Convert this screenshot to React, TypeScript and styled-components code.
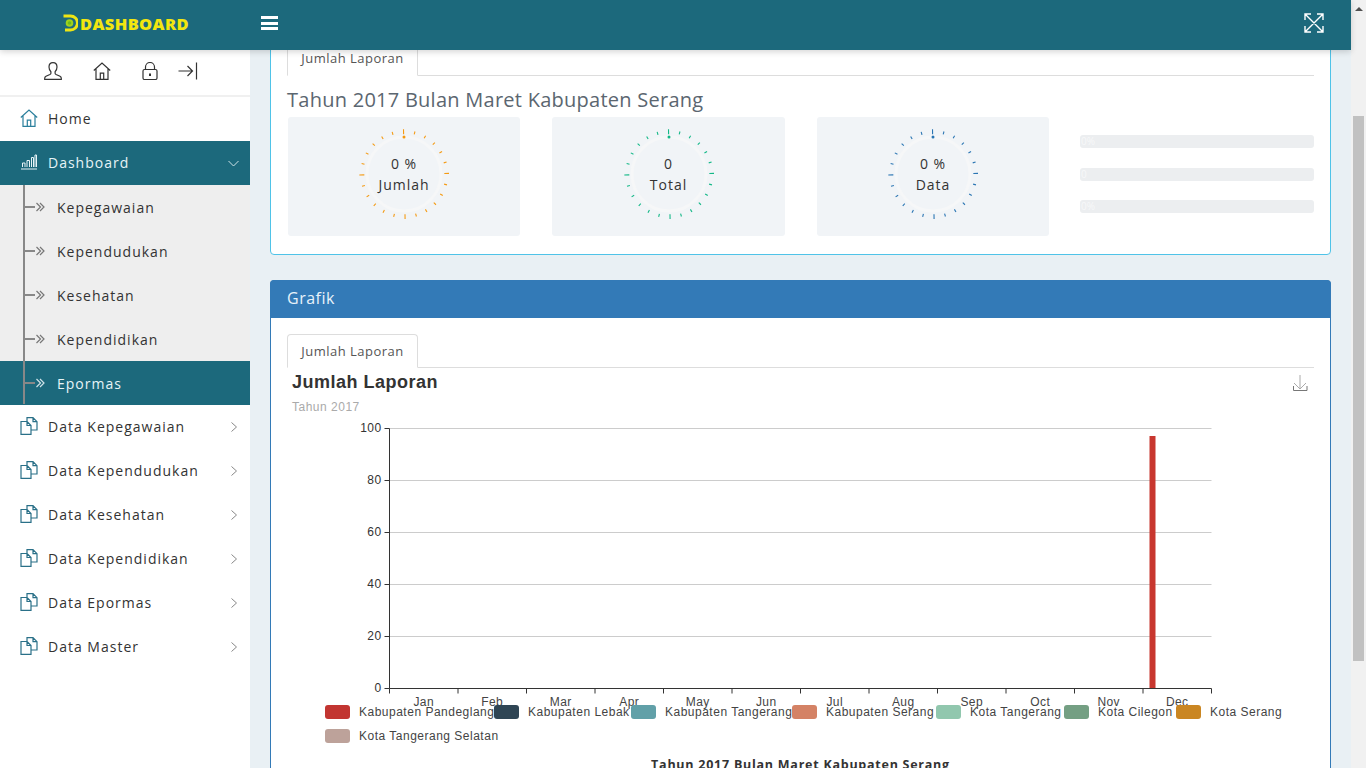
import React from 'react';
import styled, {createGlobalStyle} from 'styled-components';

const TEAL = '#1c697c';

const GlobalStyle = createGlobalStyle`
	html, body {
		margin: 0;
		padding: 0;
		height: 100%;
		overflow: hidden;
	}
	body {
		font-family: 'Open Sans', 'Liberation Sans', sans-serif;
		font-size: 14px;
		letter-spacing: 1px;
		color: #333;
	}
`;

const Shell = styled.div`
	display: flex;
	height: 768px;
	overflow: hidden;
`;

const Page = styled.div`
	flex: 1;
	min-width: 0;
	display: flex;
	flex-direction: column;
`;

const TopBar = styled.header`
	position: relative;
	z-index: 5;
	flex: 0 0 50px;
	box-sizing: border-box;
	padding-bottom: 4px;
	display: flex;
	align-items: center;
	background: ${TEAL};
	box-shadow: 0 2px 6px rgba(0, 0, 0, 0.16);
`;

const Brand = styled.div`
	width: 250px;
	display: flex;
	align-items: center;
	padding-left: 63px;
	box-sizing: border-box;
	gap: 2px;
	font-family: 'Open Sans', sans-serif;
	font-weight: 800;
	font-size: 16.5px;
	letter-spacing: 0.35px;
	color: #f2e60f;
`;

const Burger = styled.button`
	display: flex;
	flex-direction: column;
	gap: 2.5px;
	width: 17px;
	margin-left: 11px;
	padding: 0;
	border: 0;
	background: none;

	span {
		height: 3px;
		background: #fff;
	}
`;

const FullscreenButton = styled.div`
	margin-left: auto;
	margin-right: 27px;
	height: 20px;
`;

const Body = styled.div`
	flex: 1;
	min-height: 0;
	display: flex;
`;

const Sidebar = styled.aside`
	flex: 0 0 250px;
	background: #fff;
`;

const QuickIcons = styled.div`
	height: 47px;
	box-sizing: border-box;
	padding-bottom: 4px;
	display: flex;
	align-items: center;
	gap: 31px;
	padding-left: 44px;
	border-bottom: 2px solid #f0f0f0;

	svg:last-child {
		margin-left: -11px;
	}
`;

const NavRow = styled.div<{$active?: boolean}>`
	height: 44px;
	box-sizing: border-box;
	padding-bottom: 2px;
	display: flex;
	align-items: center;
	padding-left: 20px;
	gap: 10px;
	background: ${p => (p.$active ? TEAL : 'transparent')};
	color: ${p => (p.$active ? '#e6f4f7' : '#333')};
`;

const NavCaret = styled.span`
	margin-left: auto;
	margin-right: 12px;
	display: flex;
	padding-top: 2px;
`;

const SubMenu = styled.div`
	position: relative;
	background: #eee;

	&::before {
		content: '';
		position: absolute;
		left: 23px;
		top: 0;
		bottom: 1px;
		width: 2px;
		background: #888;
		z-index: 1;
	}
`;

const SubRow = styled.div<{$active?: boolean}>`
	height: 44px;
	display: flex;
	align-items: center;
	padding-left: 25px;
	background: ${p => (p.$active ? TEAL : 'transparent')};
	color: ${p => (p.$active ? '#e6f4f7' : '#333')};
`;

const Connector = styled.span`
	width: 10px;
	height: 2px;
	background: #888;
	margin-right: 1px;
`;

const SubLabel = styled.span`
	margin-left: 12px;
`;

const Content = styled.main`
	flex: 1;
	min-width: 0;
	overflow: hidden;
	background: #e9f0f4;
	padding: 0 20px;
`;

const Panel = styled.section<{$tone: string; $lift?: number}>`
	border: 1px solid ${p => p.$tone};
	border-radius: 4px;
	background: #fff;
	margin-top: ${p => p.$lift ?? 25}px;
`;

const PanelHead = styled.div`
	height: 38px;
	box-sizing: border-box;
	padding-bottom: 2px;
	margin: -1px -1px 0;
	display: flex;
	align-items: center;
	padding-left: 17px;
	background: #337ab7;
	border-radius: 4px 4px 0 0;
	color: #e8f2fa;
	font-size: 16px;
	letter-spacing: 0.5px;
`;

const PanelBody = styled.div`
	padding: 16px 16px 18px;
`;

const TabBar = styled.div`
	display: flex;
	border-bottom: 1px solid #ddd;
`;

const Tab = styled.div<{$raised?: boolean}>`
	height: 34px;
	width: 131px;
	box-sizing: border-box;
	margin-bottom: -1px;
	padding-bottom: ${p => (p.$raised ? 2 : 0)}px;
	display: flex;
	align-items: center;
	justify-content: center;
	border: 1px solid #ddd;
	border-bottom-color: #fff;
	border-radius: 4px 4px 0 0;
	font-size: 13px;
	letter-spacing: 0.5px;
	color: #555;
	background: #fff;
`;

const PeriodTitle = styled.h3`
	margin: 0;
	height: 41px;
	line-height: 48px;
	font-size: 20px;
	font-weight: 400;
	letter-spacing: 0.26px;
	color: #5b6670;
`;

const StatGrid = styled.div`
	display: grid;
	grid-template-columns: 232px 233px 232px 1fr;
	column-gap: 32px;
	padding-left: 1px;
`;

const StatCard = styled.div`
	height: 119px;
	box-sizing: border-box;
	padding-top: 12px;
	display: flex;
	justify-content: center;
	background: #f1f4f7;
	border-radius: 3px;
`;

const Dial = styled.div`
	position: relative;
	width: 90px;
	height: 90px;
`;

const DialFace = styled.div`
	position: absolute;
	inset: 0;
	display: flex;
	flex-direction: column;
	align-items: center;
	justify-content: center;
	line-height: 21px;
`;

const MeterColumn = styled.div`
	margin-left: -1px;
	padding-top: 18px;
	display: flex;
	flex-direction: column;
	gap: 19.5px;
`;

const Meter = styled.div`
	height: 13px;
	border-radius: 3px;
	background: #eceef0;
	color: #f7f8f9;
	font-size: 10px;
	line-height: 13px;
	letter-spacing: 0;
	padding-left: 1px;
`;

const Caption = styled.div`
	margin-top: 2px;
	text-align: center;
	font-size: 12.5px;
	font-weight: 700;
	letter-spacing: 0.75px;
	color: #333;
`;

const ScrollTrack = styled.div`
	flex: 0 0 15px;
	display: flex;
	flex-direction: column;
	background: #f1f1f1;
`;

const ScrollArrow = styled.div`
	height: 17px;
	display: flex;
	align-items: center;
	justify-content: center;
	flex: none;

	&::before {
		content: '';
		border-left: 4px solid transparent;
		border-right: 4px solid transparent;
		border-bottom: 4px solid #505050;
	}
`;

const ScrollThumb = styled.div`
	height: 545px;
	margin: 99px 2px 0;
	background: #c1c1c1;
`;

type IconProps = {color?: string};

const Line = {fill: 'none', strokeWidth: 1.2} as const;

const UserIcon = () => (
	<svg width="18" height="18" viewBox="0 0 18 18" stroke="#333" {...Line}>
		<path d="M9 .7c-2.400 0-4 1.800-4 4.400 0 1.900.8 3.600 1.900 4.600v1.500c0 .6-.4 1-1 1.300L2 14.200c-.8.4-1.300 1.200-1.300 2.100v1h16.600v-1c0-.9-.5-1.700-1.300-2.100l-3.900-1.700c-.6-.3-1-.7-1-1.300V9.700C12.200 8.700 13 7 13 5.100 13 2.500 11.400.7 9 .7z" />
	</svg>
);

const HomeIcon = ({color = '#333'}: IconProps) => (
	<svg width="18" height="18" viewBox="0 0 18 18" stroke={color} {...Line}>
		<path d="M.8 8.500 9 1l8.200 7.500M3 6.600v10.800h12V6.600M7.300 17.400v-6.200h3.400v6.200" />
	</svg>
);

const LockIcon = () => (
	<svg width="16" height="18" viewBox="0 0 16 18" stroke="#333" {...Line}>
		<path d="M3.500 7.500V5a4.500 4.500 0 0 1 9 0v2.500" />
		<rect x="1" y="7.500" width="14" height="10" rx="1.500" />
		<path d="M8 11.500v2.500" strokeWidth="2" />
	</svg>
);

const ExitIcon = () => (
	<svg width="20" height="18" viewBox="0 0 20 18" stroke="#333" {...Line}>
		<path d="M.5 9h14M9.500 4l5 5-5 5M18.500 .5v17" />
	</svg>
);

const ChartIcon = () => (
	<svg width="18" height="16" viewBox="0 0 17 16" stroke="#e6f4f7" fill="none" strokeWidth="1">
		<path d="M.5 15h16M2 13V9h2.500v4M6.500 13V6.500H9V13M11 13V3.500h2V13M14.500 13V1H16v12" />
	</svg>
);

const FilesIcon = () => (
	<svg width="18" height="18" viewBox="0 0 18 18" stroke="#2a7088" fill="none" strokeWidth="1.200">
		<path d="M7 4.500H1v12.900h10v-4.400M7 4.500 11 8.500v4.500M7 4.500v4h4" />
		<path d="M7 4.500V.7h6l4 4v8.300h-6M13 .7v4h4" />
	</svg>
);

const Chevron = ({open, color}: {open?: boolean; color: string}) => (
	<svg width="8" height="12" viewBox="0 0 8 12" stroke={color} fill="none" strokeWidth="1" style={{overflow: 'visible'}}>
		<path d={open ? 'M-1.500 4l5 5 5-5' : 'M1.500 1.500l5 4.500-5 4.500'} />
	</svg>
);

const DoubleArrow = ({color}: {color: string}) => (
	<svg width="9" height="10" viewBox="0 0 9 10" stroke={color} fill="none" strokeWidth="1.200">
		<path d="M.5 1l4 4-4 4M4 1l4 4-4 4" />
	</svg>
);

const Logo = () => (
	<svg width="15" height="18" viewBox="0 0 15 18" fill="none">
		<path d="M.5 2h7a6.800 6.800 0 0 1 0 14H2" stroke="#eee514" strokeWidth="3" />
		<circle cx="6.500" cy="9" r="3.800" fill="#9fd21c" />
		<circle cx="6.500" cy="9" r="1.800" fill="#6dbb1e" />
	</svg>
);

const FullscreenIcon = () => (
	<svg width="20" height="20" viewBox="0 0 20 20" stroke="#fff" fill="none" strokeWidth="1.400">
		<path d="M1 1l18 18M19 1 1 19M1 7V1h6M13 1h6v6M19 13v6h-6M7 19H1v-6" />
	</svg>
);

const Gauge = ({color, top, bottom}: {color: string; top: string; bottom: string}) => (
	<Dial>
		<svg width="90" height="90" viewBox="-45 -45 90 90" style={{position: 'absolute', inset: 0}}>
			<circle r="37" fill="none" stroke="#f6f7f8" strokeWidth="3" />
			<circle cy="-37" r="1.500" fill={color} />
			<g transform="translate(0.3 0.2) rotate(-1)">
				{Array.from({length: 24}, (_, i) => {
					const major = i % 6 === 0;
					const angle = (i * Math.PI) / 12;
					const from = major ? 40 : 41;
					const to = major ? 45 : 44;
					return (
						<line
							key={i}
							x1={Math.sin(angle) * from}
							y1={-Math.cos(angle) * from}
							x2={Math.sin(angle) * to}
							y2={-Math.cos(angle) * to}
							stroke={color}
							strokeWidth="1.100"
						/>
					);
				})}
			</g>
		</svg>
		<DialFace>
			<span>{top}</span>
			<span>{bottom}</span>
		</DialFace>
	</Dial>
);

const MONTHS = ['Jan', 'Feb', 'Mar', 'Apr', 'May', 'Jun', 'Jul', 'Aug', 'Sep', 'Oct', 'Nov', 'Dec'];

const LEGEND = [
	{name: 'Kabupaten Pandeglang', color: '#c23531', x: 38, y: 337},
	{name: 'Kabupaten Lebak', color: '#2f4554', x: 207, y: 337},
	{name: 'Kabupaten Tangerang', color: '#61a0a8', x: 344, y: 337},
	{name: 'Kabupaten Serang', color: '#d48265', x: 505, y: 337},
	{name: 'Kota Tangerang', color: '#91c7ae', x: 649, y: 337},
	{name: 'Kota Cilegon', color: '#749f83', x: 777, y: 337},
	{name: 'Kota Serang', color: '#ca8622', x: 889, y: 337},
	{name: 'Kota Tangerang Selatan', color: '#bda29a', x: 38, y: 361},
];

const ChartFigure = styled.svg`
	display: block;
	font-family: 'Liberation Sans', Arial, sans-serif;
	font-size: 12px;
	letter-spacing: 0;
`;

// coordinates are relative to the svg, which sits at x 287 / y 368 of the page
const LaporanChart = () => {
	const left = 102.5;
	const right = 924.5;
	const base = 320.5;
	const step = 52;
	const slot = (right - left) / 12;

	return (
		<ChartFigure width="1027" height="386" viewBox="0 0 1027 386">
			<text x="5" y="20" fontSize="18" fontWeight="700" fill="#333" letterSpacing="0.5">
				Jumlah Laporan
			</text>
			<text x="5" y="43" fill="#aaa" letterSpacing="0.5">
				Tahun 2017
			</text>
			<path d="M1013 7v14M1007 15l6 6 6-6" fill="none" stroke="#aaa" strokeWidth="1" />
			<path d="M1006.500 18v4.500h13.500V18" fill="none" stroke="#777" strokeWidth="1" />

			{[1, 2, 3, 4, 5].map(i => (
				<line key={i} x1={left} x2={right} y1={base - step * i} y2={base - step * i} stroke="#ccc" />
			))}
			{[0, 1, 2, 3, 4, 5].map(i => (
				<g key={i}>
					<line x1={left - 5} x2={left} y1={base - step * i} y2={base - step * i} stroke="#333" />
					<text x={left - 8} y={base - step * i + 3.5} textAnchor="end" fill="#333" letterSpacing="0.4">
						{i * 20}
					</text>
				</g>
			))}
			<line x1={left} x2={left} y1={base - step * 5} y2={base} stroke="#333" />
			<line x1={left} x2={right} y1={base} y2={base} stroke="#333" />
			{Array.from({length: 13}, (_, i) => (
				<line key={i} x1={left + slot * i} x2={left + slot * i} y1={base} y2={base + 5} stroke="#333" />
			))}
			{MONTHS.map((m, i) => (
				<text key={m} x={left + slot * (i + 0.5)} y={338} textAnchor="middle" fill="#444" letterSpacing="0.4">
					{m}
				</text>
			))}

			<rect x="862.500" y="68" width="6" height="252" fill="#c8372f" />

			{LEGEND.map(item => (
				<g key={item.name}>
					<rect x={item.x} y={item.y} width="25" height="14" rx="3" fill={item.color} />
					<text x={item.x + 34} y={item.y + 11} fill="#444" letterSpacing="0.5">
						{item.name}
					</text>
				</g>
			))}
		</ChartFigure>
	);
};

const SUB_ITEMS = ['Kepegawaian', 'Kependudukan', 'Kesehatan', 'Kependidikan', 'Epormas'];
const DATA_ITEMS = ['Data Kepegawaian', 'Data Kependudukan', 'Data Kesehatan', 'Data Kependidikan', 'Data Epormas', 'Data Master'];

export default function App() {
	return (
		<Shell>
			<GlobalStyle />
			<Page>
				<TopBar>
					<Brand>
						<Logo />
						DASHBOARD
					</Brand>
					<Burger aria-label="menu">
						<span />
						<span />
						<span />
					</Burger>
					<FullscreenButton>
						<FullscreenIcon />
					</FullscreenButton>
				</TopBar>
				<Body>
					<Sidebar>
						<QuickIcons>
							<UserIcon />
							<HomeIcon />
							<LockIcon />
							<ExitIcon />
						</QuickIcons>
						<NavRow>
							<HomeIcon color="#2a7f9c" />
							Home
						</NavRow>
						<NavRow $active>
							<ChartIcon />
							Dashboard
							<NavCaret>
								<Chevron open color="#cfe3e8" />
							</NavCaret>
						</NavRow>
						<SubMenu>
							{SUB_ITEMS.map(label => (
								<SubRow key={label} $active={label === 'Epormas'}>
									<Connector />
									<DoubleArrow color={label === 'Epormas' ? '#cfe3e8' : '#777'} />
									<SubLabel>{label}</SubLabel>
								</SubRow>
							))}
						</SubMenu>
						{DATA_ITEMS.map(label => (
							<NavRow key={label}>
								<FilesIcon />
								{label}
								<NavCaret>
									<Chevron color="#888" />
								</NavCaret>
							</NavRow>
						))}
					</Sidebar>
					<Content>
						<Panel $tone="#4fc3e8" $lift={-25}>
							<PanelBody>
								<TabBar>
									<Tab $raised>Jumlah Laporan</Tab>
								</TabBar>
								<PeriodTitle>Tahun 2017 Bulan Maret Kabupaten Serang</PeriodTitle>
								<StatGrid>
									<StatCard>
										<Gauge color="#f59a12" top="0 %" bottom="Jumlah" />
									</StatCard>
									<StatCard>
										<Gauge color="#12b886" top="0" bottom="Total" />
									</StatCard>
									<StatCard>
										<Gauge color="#2a75b3" top="0 %" bottom="Data" />
									</StatCard>
									<MeterColumn>
										<Meter>0%</Meter>
										<Meter>0</Meter>
										<Meter>0%</Meter>
									</MeterColumn>
								</StatGrid>
							</PanelBody>
						</Panel>
						<Panel $tone="#337ab7">
							<PanelHead>Grafik</PanelHead>
							<PanelBody>
								<TabBar>
									<Tab>Jumlah Laporan</Tab>
								</TabBar>
								<LaporanChart />
								<Caption>Tahun 2017 Bulan Maret Kabupaten Serang</Caption>
							</PanelBody>
						</Panel>
					</Content>
				</Body>
			</Page>
			<ScrollTrack>
				<ScrollArrow />
				<ScrollThumb />
			</ScrollTrack>
		</Shell>
	);
}
